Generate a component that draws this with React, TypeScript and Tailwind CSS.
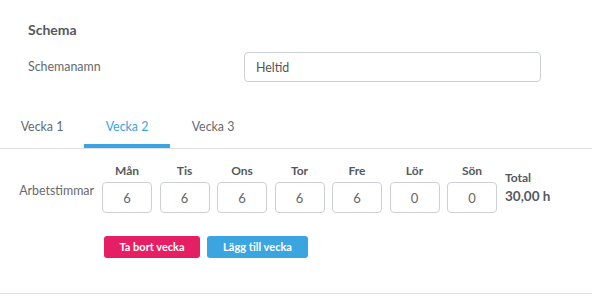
const days = [
  { name: 'Mån', value: '6' },
  { name: 'Tis', value: '6' },
  { name: 'Ons', value: '6' },
  { name: 'Tor', value: '6' },
  { name: 'Fre', value: '6' },
  { name: 'Lör', value: '0' },
  { name: 'Sön', value: '0' },
];

const tabs = ['Vecka 1', 'Vecka 2', 'Vecka 3'];

export default function App() {
  const active = 1;

  return (
    <div className="w-[592px] h-[301px] bg-white font-['Lato',_sans-serif] text-[#5f6368]">
      <div className="pl-[28px] pt-[22px]">
        <h2 className="text-[14px] leading-[16px] font-bold text-[#55595e]">Schema</h2>
        <div className="flex items-center mt-[14px]">
          <label className="w-[216px] text-[12.4px] text-[#666a6e]">Schemanamn</label>
          <input
            defaultValue="Heltid"
            className="w-[297px] h-[30px] border border-[#ccd0d6] rounded-[4px] px-[11px] text-[12.4px] text-[#555] outline-none"
          />
        </div>
      </div>

      <div className="flex mt-[28px] border-b border-[#dfe1e4]">
        {tabs.map((tab, i) => (
          <div
            key={tab}
            className={
              i === 0
                ? 'w-[84px] h-[38px] pt-[8px] text-center text-[12.4px] text-[#666a6e] border-b-4 border-transparent'
                : i === active
                  ? 'w-[86px] h-[38px] pt-[8px] text-center text-[12.4px] text-[#3aa5e0] border-b-4 border-[#3aa5e0]'
                  : 'w-[86px] h-[38px] pt-[8px] text-center text-[12.4px] text-[#666a6e] border-b-4 border-transparent'
            }
          >
            {tab}
          </div>
        ))}
      </div>

      <div className="border-b border-[#dfe1e4] pb-[35px]">
        <div className="flex pt-[14px]">
          <div className="w-[102px] pr-[8px] pt-[20px] text-right text-[12.4px] leading-[16px] text-[#666a6e]">
            Arbetstimmar
          </div>
          <div className="flex gap-[7.5px]">
            {days.map((d) => (
              <div key={d.name} className="w-[50px] flex flex-col items-center">
                <span className="text-[12px] leading-[16px] font-bold text-[#55595e]">{d.name}</span>
                <input
                  defaultValue={d.value}
                  className="mt-[3px] w-[50px] h-[31px] border border-[#ccd0d6] rounded-[4px] text-center text-[13px] text-[#666] outline-none"
                />
              </div>
            ))}
          </div>
          <div className="ml-[8px] pt-[7px] text-[#55595e] font-bold">
            <div className="text-[12px] leading-[16px]">Total</div>
            <div className="text-[13.5px] leading-[18px] mt-[1px]">30,00 h</div>
          </div>
        </div>

        <div className="flex gap-[7px] ml-[104px] mt-[23px]">
          <button className="w-[96px] h-[22px] rounded-[3px] bg-[#e61e63] text-white text-[11px] font-bold">
            Ta bort vecka
          </button>
          <button className="w-[101px] h-[22px] rounded-[3px] bg-[#3aa5e0] text-white text-[11px] font-bold">
            Lägg till vecka
          </button>
        </div>
      </div>
    </div>
  );
}
